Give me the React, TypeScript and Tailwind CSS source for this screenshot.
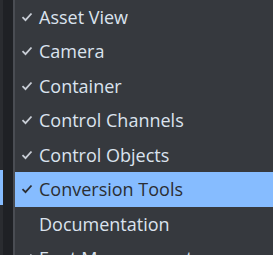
import React from 'react';

const items = [
  { label: 'Asset View', checked: true },
  { label: 'Camera', checked: true },
  { label: 'Container', checked: true },
  { label: 'Control Channels', checked: true },
  { label: 'Control Objects', checked: true },
  { label: 'Conversion Tools', checked: true, active: true },
  { label: 'Documentation', checked: false },
  { label: 'Font Management', checked: true },
];

function Check({ dark }: { dark?: boolean }) {
  return (
    <svg width="12" height="10" viewBox="0 0 12 10" className="shrink-0">
      <path
        d="M1.5 5.2 L4.5 8.2 L10.5 1.5"
        fill="none"
        stroke={dark ? '#2b2e33' : '#c9ced6'}
        strokeWidth="1.8"
      />
    </svg>
  );
}

export default function App() {
  return (
    <div className="flex w-[273px] h-[255px] overflow-hidden bg-[#36393e] font-['Open_Sans',sans-serif]">
      {/* window behind the menu */}
      <div className="flex w-[13px] shrink-0 bg-[#1f2125]">
        <div className="flex flex-col w-[3px] bg-[#2a2c30]">
          <div className="h-[170px]" />
          <div className="h-[35px] bg-[#86bcff]" />
        </div>
      </div>
      <div className="w-[2px] shrink-0 bg-[#4a4d53]" />

      {/* menu */}
      <div className="flex-1 flex flex-col -mt-[0.5px]">
        {items.map((it) => (
          <div
            key={it.label}
            className={`flex items-center h-[34.5px] shrink-0 pl-[6px] gap-[6px] text-[18px] ${
              it.active ? 'bg-[#86bcff] text-[#2b2e33]' : 'text-[#dbe3ee]'
            }`}
          >
            <div className="w-[12px] flex justify-center">{it.checked && <Check dark={it.active} />}</div>
            <span className="whitespace-nowrap leading-none">{it.label}</span>
          </div>
        ))}
      </div>
    </div>
  );
}
